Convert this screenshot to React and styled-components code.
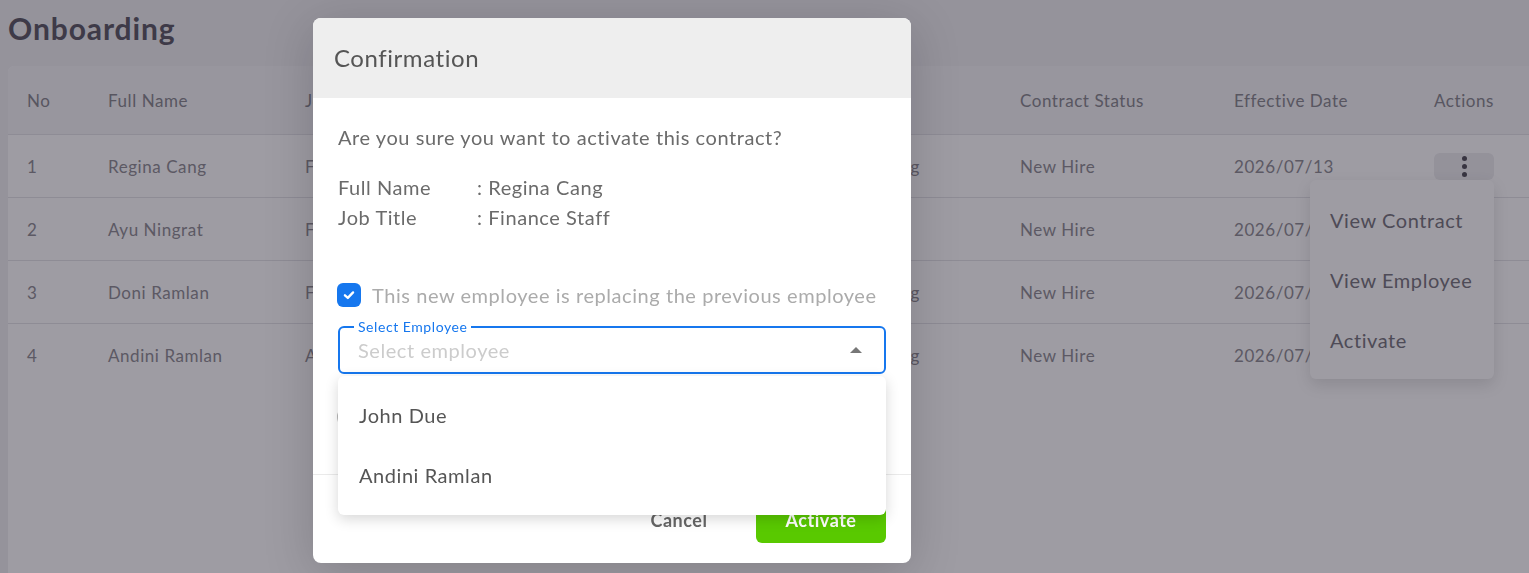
import React from "react";
import styled, { createGlobalStyle } from "styled-components";

const GlobalStyle = createGlobalStyle`
  * { box-sizing: border-box; }
  html, body { margin: 0; padding: 0; }
  body {
    font-family: "Lato", "Noto Sans", sans-serif;
    letter-spacing: 0.035em;
    background: #f0f0f2;
    overflow: hidden;
  }
`;

const rows = [
  { no: 1, name: "Regina Cang", job: "Finance Staff", dept: "Finance", status: "Onboarding", contract: "New Hire", date: "2026/07/13" },
  { no: 2, name: "Ayu Ningrat", job: "Finance Staff", dept: "Finance", status: "Pending", contract: "New Hire", date: "2026/07/01" },
  { no: 3, name: "Doni Ramlan", job: "Finance Staff", dept: "Finance", status: "Onboarding", contract: "New Hire", date: "2026/07/01" },
  { no: 4, name: "Andini Ramlan", job: "Admin Staff", dept: "General", status: "Onboarding", contract: "New Hire", date: "2026/07/01" },
];

const columns = "81px 197px 260px 261px 194px 214px 200px 1fr";

export default function App() {
  return (
    <>
      <GlobalStyle />
      <Page>
        <Title>Onboarding</Title>
        <Card>
          <HeadRow>
            <Cell>No</Cell>
            <Cell>Full Name</Cell>
            <Cell>Job Title</Cell>
            <Cell>Department</Cell>
            <Cell>Status</Cell>
            <Cell>Contract Status</Cell>
            <Cell>Effective Date</Cell>
            <Cell>Actions</Cell>
          </HeadRow>
          {rows.map((r) => (
            <BodyRow key={r.no}>
              <Cell>{r.no}</Cell>
              <Cell>{r.name}</Cell>
              <Cell>{r.job}</Cell>
              <Cell>{r.dept}</Cell>
              <Cell>{r.status}</Cell>
              <Cell>{r.contract}</Cell>
              <Cell>{r.date}</Cell>
              <ActionCell>
                <DotsButton>
                  <Dot />
                  <Dot />
                  <Dot />
                </DotsButton>
                {r.no === 1 && (
                  <ActionMenu>
                    <MenuItem>View Contract</MenuItem>
                    <MenuItem>View Employee</MenuItem>
                    <MenuItem>Activate</MenuItem>
                  </ActionMenu>
                )}
              </ActionCell>
            </BodyRow>
          ))}
        </Card>
      </Page>

      <Backdrop />

      <Modal>
        <ModalHeader>Confirmation</ModalHeader>
        <ModalBody>
          <Question>Are you sure you want to activate this contract?</Question>
          <InfoList>
            <InfoRow>
              <InfoLabel>Full Name</InfoLabel>
              <span>: Regina Cang</span>
            </InfoRow>
            <InfoRow>
              <InfoLabel>Job Title</InfoLabel>
              <span>: Finance Staff</span>
            </InfoRow>
          </InfoList>

          <CheckRow>
            <CheckBox checked>
              <svg width="14" height="14" viewBox="0 0 24 24" fill="none" stroke="#fff" strokeWidth="4" strokeLinecap="round" strokeLinejoin="round">
                <polyline points="5 12.5 10 17 19 7.5" />
              </svg>
            </CheckBox>
            <CheckLabel>This new employee is replacing the previous employee</CheckLabel>
          </CheckRow>

          <SelectField>
            <Legend>Select Employee</Legend>
            <Placeholder>Select employee</Placeholder>
            <Caret />
            <OptionList>
              <Option>John Due</Option>
              <Option>Andini Ramlan</Option>
            </OptionList>
          </SelectField>

          <CheckRow $second>
            <CheckBox />
            <CheckLabel>Send notification to the employee</CheckLabel>
          </CheckRow>
        </ModalBody>
        <ModalFooter>
          <Button>Cancel</Button>
          <Button $primary>Activate</Button>
        </ModalFooter>
      </Modal>
    </>
  );
}

const Page = styled.div`
  min-height: 100vh;
  padding: 8px 0 0 8px;
  display: flex;
  flex-direction: column;
`;

const Title = styled.h1`
  margin: 0;
  font-size: 30px;
  font-weight: 700;
  color: #5f5d68;
  line-height: 40px;
  letter-spacing: 0.03em;
`;

const Card = styled.div`
  margin-top: 18px;
  flex: 1;
  background: #ffffff;
  border-radius: 6px 0 0 0;
`;

const HeadRow = styled.div`
  display: grid;
  grid-template-columns: ${columns};
  align-items: center;
  height: 69px;
  padding-left: 19px;
  background: #f5f5f7;
  border-bottom: 1px solid #e4e4e8;
  color: #8a8a90;
  font-size: 17px;
  border-radius: 6px 0 0 0;
`;

const BodyRow = styled.div`
  display: grid;
  grid-template-columns: ${columns};
  align-items: center;
  height: 63px;
  padding-left: 19px;
  border-bottom: 1px solid #e4e4e8;
  color: #929096;
  font-size: 17px;

  &:last-child {
    border-bottom: none;
  }
`;

const Cell = styled.div`
  white-space: nowrap;
`;

const ActionCell = styled.div`
  position: relative;
`;

const DotsButton = styled.div`
  width: 60px;
  height: 27px;
  border-radius: 6px;
  background: #eeeef0;
  display: flex;
  flex-direction: column;
  align-items: center;
  justify-content: center;
  gap: 3px;
`;

const Dot = styled.span`
  width: 5px;
  height: 5px;
  border-radius: 50%;
  background: #55535c;
`;

const ActionMenu = styled.div`
  position: absolute;
  top: 27px;
  right: calc(100% - 60px);
  width: 184px;
  padding: 10px 0 9px;
  background: #ffffff;
  border-radius: 6px;
  box-shadow: 0 6px 16px rgba(0, 0, 0, 0.12);
  z-index: 2;
`;

const MenuItem = styled.div`
  height: 60px;
  display: flex;
  align-items: center;
  padding-left: 20px;
  font-size: 20px;
  color: #7a7880;
`;

const Backdrop = styled.div`
  position: fixed;
  inset: 0;
  background: rgba(13, 8, 25, 0.4);
  z-index: 10;
`;

const Modal = styled.div`
  position: fixed;
  left: 313px;
  top: 18px;
  width: 598px;
  height: 545px;
  background: #ffffff;
  border-radius: 8px;
  box-shadow: 0 10px 50px rgba(0, 0, 0, 0.18);
  z-index: 11;
  display: flex;
  flex-direction: column;
`;

const ModalHeader = styled.div`
  height: 80px;
  flex-shrink: 0;
  display: flex;
  align-items: center;
  padding: 0 0 2px 21px;
  background: #eeeeee;
  border-radius: 8px 8px 0 0;
  font-size: 24px;
  color: #555555;
`;

const ModalBody = styled.div`
  flex: 1;
  padding: 24px 25px 0;
  display: flex;
  flex-direction: column;
`;

const Question = styled.div`
  font-size: 20px;
  line-height: 30px;
  color: #6b6b6b;
`;

const InfoList = styled.div`
  margin-top: 20px;
  display: flex;
  flex-direction: column;
`;

const InfoRow = styled.div`
  display: flex;
  font-size: 20px;
  line-height: 30px;
  color: #6b6b6b;
`;

const InfoLabel = styled.span`
  width: 139px;
`;

const CheckRow = styled.div`
  display: flex;
  align-items: center;
  gap: 11px;
  height: 24px;
  margin-top: ${(p) => (p.$second ? "31px" : "51px")};
  margin-left: -1px;
`;

const CheckBox = styled.div`
  width: 24px;
  height: 24px;
  border-radius: ${(p) => (p.checked ? "6px" : "12px")};
  flex-shrink: 0;
  display: flex;
  align-items: center;
  justify-content: center;
  background: ${(p) => (p.checked ? "#1677ee" : "#ffffff")};
  border: ${(p) => (p.checked ? "none" : "2px solid #b8b8b8")};
`;

const CheckLabel = styled.span`
  font-size: 20px;
  color: #ababab;
  white-space: nowrap;
`;

const SelectField = styled.div`
  position: relative;
  margin-top: 19px;
  height: 48px;
  border: 2px solid #1677ee;
  border-radius: 6px;
  display: flex;
  align-items: center;
  padding: 0 18px;
`;

const Legend = styled.span`
  position: absolute;
  top: -9px;
  left: 14px;
  padding: 0 4px;
  background: #ffffff;
  font-size: 14px;
  line-height: 16px;
  color: #1677ee;
`;

const Placeholder = styled.span`
  flex: 1;
  font-size: 20px;
  color: #cccccc;
`;

const Caret = styled.span`
  width: 0;
  height: 0;
  border-left: 6px solid transparent;
  border-right: 6px solid transparent;
  border-bottom: 6px solid #777777;
  margin-right: 4px;
`;

const OptionList = styled.div`
  position: absolute;
  top: calc(100% + 4px);
  left: -2px;
  right: -2px;
  padding: 9px 0 10px;
  background: #ffffff;
  border-radius: 6px;
  box-shadow: 0 4px 14px rgba(0, 0, 0, 0.16);
  z-index: 5;
`;

const Option = styled.div`
  height: 60px;
  display: flex;
  align-items: center;
  padding-left: 21px;
  font-size: 20px;
  color: #555555;
`;

const ModalFooter = styled.div`
  flex-shrink: 0;
  height: 89px;
  border-top: 1px solid #eaeaea;
  display: flex;
  justify-content: flex-end;
  align-items: flex-start;
  gap: 12px;
  padding: 22px 25px 0;
`;

const Button = styled.button`
  width: 130px;
  height: 46px;
  border: none;
  border-radius: 6px;
  font-family: inherit;
  letter-spacing: 0.03em;
  font-size: 18px;
  font-weight: 700;
  background: ${(p) => (p.$primary ? "#59c900" : "transparent")};
  color: ${(p) => (p.$primary ? "#ffffff" : "#666666")};
`;
